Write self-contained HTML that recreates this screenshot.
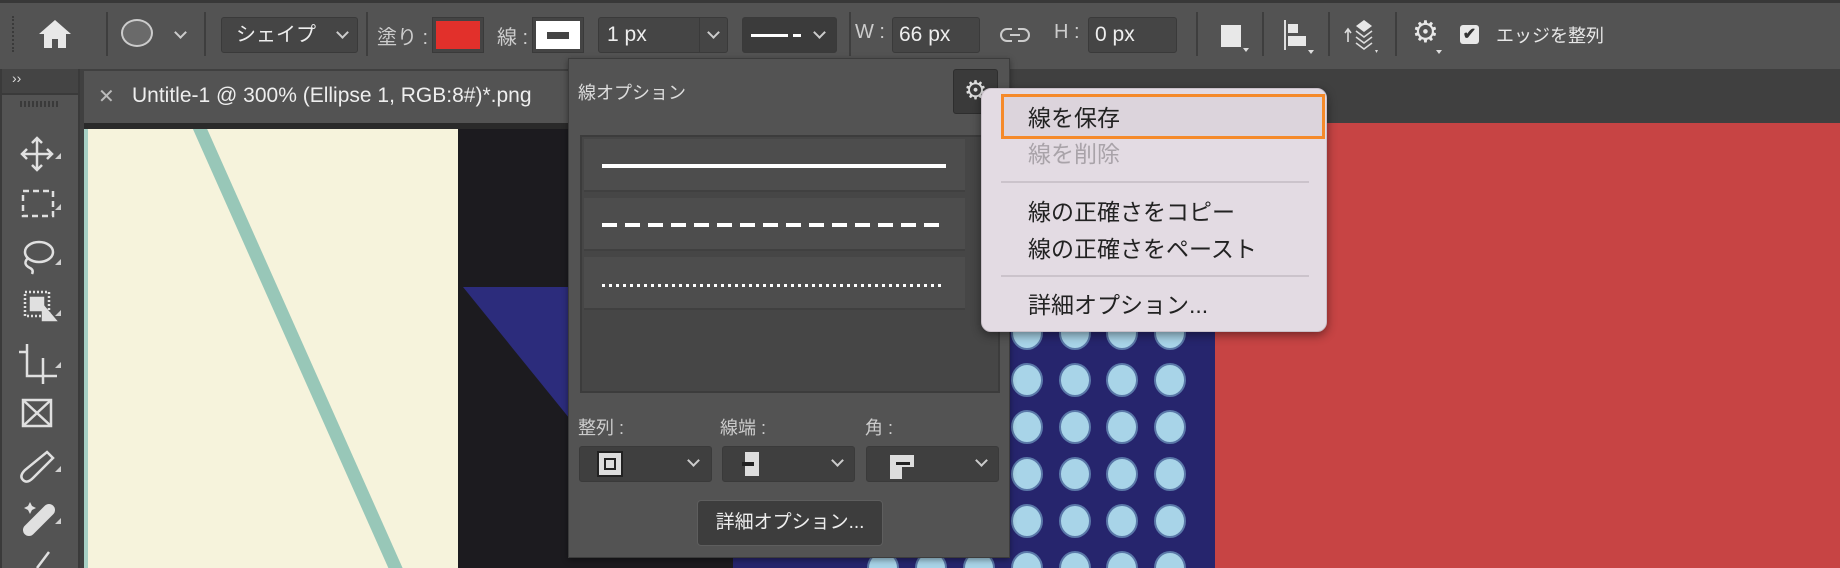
<!DOCTYPE html>
<html><head><meta charset="utf-8"><style>
*{box-sizing:border-box;margin:0;padding:0}
body{width:1840px;height:568px;overflow:hidden;background:#404040;font-family:"Liberation Sans","Noto Sans CJK JP",sans-serif;position:relative;color:#ddd}
.a{position:absolute}
.sep{position:absolute;top:12px;width:2px;height:44px;background:#3e3e3e}
.fld{position:absolute;background:#454545;border:1px solid #3a3a3a;border-radius:3px;color:#eee;font-size:21px;line-height:34px}
.lbl{position:absolute;font-size:20px;color:#ccc;top:21px}
.chev{position:absolute;width:9px;height:9px;border-right:2px solid #ccc;border-bottom:2px solid #ccc;transform:rotate(45deg)}
.menu div.t{position:absolute;left:46px;font-size:23px;color:#222}
</style></head><body>
<div class="a" style="left:0;top:0;width:1840px;height:3px;background:#383838"></div>
<div class="a" style="left:0;top:3px;width:1840px;height:66px;background:#535353"></div>
<div class="a" style="left:12px;top:16px;width:3px;height:36px;border-left:2px dotted #3a3a3a"></div>
<svg class="a" style="left:38px;top:19px" width="34" height="30" viewBox="0 0 34 30"><path d="M17 1 L33 15 H28 V29 H20 V20 H14 V29 H6 V15 H1 Z" fill="#e8e8e8"/></svg>
<div class="sep" style="left:106px"></div>
<div class="a" style="left:121px;top:19px;width:32px;height:28px;border-radius:50%;border:2px solid #ccc;background:#6a6a6a"></div>
<div class="chev" style="left:176px;top:28px"></div>
<div class="sep" style="left:204px"></div>
<div class="fld" style="left:221px;top:17px;width:137px;height:36px;padding-left:14px;font-size:20px">シェイプ</div>
<div class="chev" style="left:338px;top:28px"></div>
<div class="sep" style="left:366px"></div>
<div class="lbl" style="left:377px">塗り :</div>
<div class="a" style="left:432px;top:17px;width:52px;height:36px;border:1px solid #3a3a3a;background:#e2302b;box-shadow:inset 0 0 0 3px #444"></div>
<div class="lbl" style="left:497px">線 :</div>
<div class="a" style="left:532px;top:17px;width:52px;height:36px;border:1px solid #3a3a3a;background:#fff;box-shadow:inset 0 0 0 3px #444"></div>
<div class="a" style="left:547px;top:32px;width:22px;height:7px;background:#444"></div>
<div class="fld" style="left:598px;top:17px;width:130px;height:36px;padding-left:8px">1 px</div>
<div class="a" style="left:699px;top:18px;width:1px;height:34px;background:#3a3a3a"></div>
<div class="chev" style="left:709px;top:28px"></div>
<div class="fld" style="left:742px;top:17px;width:95px;height:36px;background:#3b3b3b"></div>
<div class="a" style="left:751px;top:34px;width:37px;height:3px;background:#fff"></div>
<div class="a" style="left:793px;top:34px;width:8px;height:3px;background:#fff"></div>
<div class="chev" style="left:815px;top:28px"></div>
<div class="sep" style="left:849px"></div>
<div class="lbl" style="left:855px">W :</div>
<div class="fld" style="left:892px;top:17px;width:88px;height:36px;padding-left:6px">66 px</div>
<svg class="a" style="left:1000px;top:26px" width="30" height="18" viewBox="0 0 30 18" fill="none" stroke="#ccc" stroke-width="2"><path d="M12 3 H7 a6 6 0 0 0 0 12 H12 M18 3 H23 a6 6 0 0 1 0 12 H18 M10 9 H20"/></svg>
<div class="lbl" style="left:1054px">H :</div>
<div class="fld" style="left:1088px;top:17px;width:89px;height:36px;padding-left:6px">0 px</div>
<div class="sep" style="left:1196px"></div>
<div class="a" style="left:1221px;top:25px;width:20px;height:22px;background:#e8e8e8"></div>
<div class="a" style="left:1243px;top:48px;border:3px solid transparent;border-top:4px solid #ddd"></div>
<div class="sep" style="left:1262px"></div>
<div class="a" style="left:1284px;top:20px;width:2px;height:30px;background:#ddd"></div>
<div class="a" style="left:1288px;top:24px;width:10px;height:9px;background:#e8e8e8"></div>
<div class="a" style="left:1288px;top:36px;width:18px;height:10px;background:#e8e8e8"></div>
<div class="a" style="left:1308px;top:50px;border:3px solid transparent;border-top:4px solid #ddd"></div>
<div class="sep" style="left:1328px"></div>
<svg class="a" style="left:1342px;top:16px" width="40" height="40" viewBox="0 0 40 40"><path d="M6 26 V14 M3 17 L6 13 L9 17" stroke="#ddd" stroke-width="1.6" fill="none"/><path d="M22 4 L30 10 L22 16 L14 10 Z" fill="#e8e8e8"/><path d="M14 15 L22 21 L30 15 M14 21 L22 27 L30 21 M14 27 L22 33 L30 27" stroke="#ddd" stroke-width="1.6" fill="none"/><path d="M33 34 l3 0 l-1.5 3z" fill="#ddd"/></svg>
<div class="sep" style="left:1395px"></div>
<div class="a" style="left:1412px;top:18px;font-size:30px;color:#e8e8e8;line-height:30px">&#x2699;</div>
<div class="a" style="left:1436px;top:50px;border:3px solid transparent;border-top:4px solid #ddd"></div>
<div class="a" style="left:1460px;top:25px;width:19px;height:19px;background:#e8e8e8;border-radius:3px;color:#333;font-size:16px;line-height:19px;text-align:center;font-weight:bold">&#x2714;</div>
<div class="a" style="left:1496px;top:22px;font-size:18px;color:#e8e8e8">エッジを整列</div>

<div class="a" style="left:0;top:69px;width:80px;height:499px;background:#3a3a3a"></div>
<div class="a" style="left:2px;top:69px;width:76px;height:24px;background:#444"></div>
<div class="a" style="left:12px;top:70px;font-size:14px;color:#ddd">&#x203A;&#x203A;</div>
<div class="a" style="left:2px;top:95px;width:76px;height:473px;background:#535353"></div>
<div class="a" style="left:20px;top:101px;width:38px;height:6px;background:repeating-linear-gradient(90deg,#3a3a3a 0 2px,transparent 2px 4px)"></div>
<svg class="a" style="left:0;top:130px" width="80" height="438" viewBox="0 0 80 438" fill="none" stroke="#e0e0e0" stroke-width="2.5">
<path d="M37 8 V40 M22 24 H52 M32 13 L37 8 L42 13 M32 35 L37 40 L42 35 M27 19 L22 24 L27 29 M47 19 L52 24 L47 29"/>
<rect x="23" y="61" width="30" height="25" stroke-dasharray="6 4"/>
<ellipse cx="39" cy="122" rx="14" ry="10"/><path d="M28 128 q-6 6 2 10 q4 2 2 6"/>
<rect x="25" y="162" width="24" height="24" stroke-dasharray="2 2"/><rect x="31" y="168" width="12" height="12" fill="#e0e0e0"/><path d="M43 176 L55 190 L43 190 Z" fill="#e0e0e0"/>
<path d="M19 222 H27 V246 H51 M27 214 V222 M43 228 V254 M51 246 H57"/>
<rect x="23" y="270" width="28" height="26"/><path d="M23 270 L51 296 M51 270 L23 296"/>
<path d="M47 322 L53 328 L33 348 q-6 6 -10 2 q-4 -4 2 -10 Z"/>
<path d="M29 400 L49 380" stroke-width="12" stroke-linecap="round" stroke="#e0e0e0"/>
<path d="M30 372 l2 4 4 2 -4 2 -2 4 -2 -4 -4 -2 4 -2z" fill="#e0e0e0" stroke="none"/>
<path d="M37 438 L49 422" />
</svg>
<svg class="a" style="left:55px;top:150px" width="12" height="400"><g fill="#cfcfcf"><path d="M0 9 L6 3 V9Z"/><path d="M0 60 L6 54 V60Z"/><path d="M0 115 L6 109 V115Z"/><path d="M0 166 L6 160 V166Z"/><path d="M0 218 L6 212 V218Z"/><path d="M0 322 L6 316 V322Z"/><path d="M0 374 L6 368 V374Z"/></g></svg>

<div class="a" style="left:84px;top:71px;width:1756px;height:52px;background:#404040"></div>
<div class="a" style="left:84px;top:71px;width:500px;height:52px;background:#535353"></div>
<div class="a" style="left:98px;top:84px;font-size:20px;color:#bbb">&#x2715;</div>
<div class="a" style="left:132px;top:84px;font-size:21px;color:#eee;white-space:nowrap">Untitle-1 @ 300% (Ellipse 1, RGB:8#)*.png</div>
<div class="a" style="left:84px;top:123px;width:1756px;height:6px;background:#2a2a2a"></div>

<div class="a" style="left:84px;top:129px;width:374px;height:439px;background:#f6f3dc;overflow:hidden">
<div class="a" style="left:100px;top:-20px;width:13px;height:520px;background:#98c7b8;transform:rotate(-24deg);transform-origin:0 0"></div>
<div class="a" style="left:0;top:0;width:4px;height:439px;background:#a8d0c4"></div>
</div>
<div class="a" style="left:458px;top:129px;width:757px;height:439px;background:#1c1b1f"></div>
<svg class="a" style="left:458px;top:129px" width="757" height="439"><path d="M5 158 H120 V300 Z" fill="#2c2c7c"/><rect x="275" y="150" width="482" height="289" fill="#26256d"/></svg>
<svg class="a" style="left:733px;top:300px" width="482" height="268"><g fill="#a8d4e8" stroke="#5a78a8" stroke-width="2">
<g><ellipse cx="294" cy="33" rx="15" ry="16"/><ellipse cx="342" cy="33" rx="15" ry="16"/><ellipse cx="389" cy="33" rx="15" ry="16"/><ellipse cx="437" cy="33" rx="15" ry="16"/></g>
<g transform="translate(0,47)"><ellipse cx="294" cy="33" rx="15" ry="16"/><ellipse cx="342" cy="33" rx="15" ry="16"/><ellipse cx="389" cy="33" rx="15" ry="16"/><ellipse cx="437" cy="33" rx="15" ry="16"/></g>
<g transform="translate(0,94)"><ellipse cx="294" cy="33" rx="15" ry="16"/><ellipse cx="342" cy="33" rx="15" ry="16"/><ellipse cx="389" cy="33" rx="15" ry="16"/><ellipse cx="437" cy="33" rx="15" ry="16"/></g>
<g transform="translate(0,141)"><ellipse cx="294" cy="33" rx="15" ry="16"/><ellipse cx="342" cy="33" rx="15" ry="16"/><ellipse cx="389" cy="33" rx="15" ry="16"/><ellipse cx="437" cy="33" rx="15" ry="16"/></g>
<g transform="translate(0,188)"><ellipse cx="294" cy="33" rx="15" ry="16"/><ellipse cx="342" cy="33" rx="15" ry="16"/><ellipse cx="389" cy="33" rx="15" ry="16"/><ellipse cx="437" cy="33" rx="15" ry="16"/></g>
<g transform="translate(0,235)"><ellipse cx="294" cy="33" rx="15" ry="16"/><ellipse cx="342" cy="33" rx="15" ry="16"/><ellipse cx="389" cy="33" rx="15" ry="16"/><ellipse cx="437" cy="33" rx="15" ry="16"/><ellipse cx="150" cy="33" rx="15" ry="16"/><ellipse cx="198" cy="33" rx="15" ry="16"/><ellipse cx="246" cy="33" rx="15" ry="16"/></g>
<g transform="translate(0,-47)"><ellipse cx="294" cy="33" rx="15" ry="16"/><ellipse cx="342" cy="33" rx="15" ry="16"/><ellipse cx="389" cy="33" rx="15" ry="16"/><ellipse cx="437" cy="33" rx="15" ry="16"/></g>
</g></svg>
<div class="a" style="left:1215px;top:123px;width:625px;height:445px;background:#c74444"></div>

<div class="a" style="left:568px;top:58px;width:442px;height:500px;background:#535353;border:1px solid #3c3c3c;box-shadow:0 2px 6px rgba(0,0,0,.4)"></div>
<div class="a" style="left:578px;top:79px;font-size:18px;color:#ddd">線オプション</div>
<div class="a" style="left:953px;top:69px;width:45px;height:45px;background:#3a3a3a;border:1px solid #2e2e2e;border-radius:3px;color:#ddd;font-size:26px;text-align:center;line-height:40px">&#x2699;</div>
<div class="a" style="left:580px;top:135px;width:420px;height:258px;background:#464646;border:2px solid #3c3c3c"></div>
<div class="a" style="left:584px;top:139px;width:381px;height:53px;background:#4d4d4d;border-bottom:2px solid #404040"></div>
<div class="a" style="left:584px;top:198px;width:381px;height:53px;background:#4d4d4d;border-bottom:2px solid #404040"></div>
<div class="a" style="left:584px;top:257px;width:381px;height:53px;background:#4d4d4d;border-bottom:2px solid #404040"></div>
<div class="a" style="left:602px;top:164px;width:344px;height:4px;background:#fff"></div>
<div class="a" style="left:602px;top:223px;width:344px;height:4px;background:repeating-linear-gradient(90deg,#fff 0 15px,transparent 15px 23px)"></div>
<div class="a" style="left:602px;top:284px;width:342px;height:3px;background:repeating-linear-gradient(90deg,#fff 0 3px,transparent 3px 7px)"></div>
<div class="a" style="left:578px;top:414px;font-size:18px;color:#ccc">整列 :</div>
<div class="a" style="left:720px;top:414px;font-size:18px;color:#ccc">線端 :</div>
<div class="a" style="left:865px;top:414px;font-size:18px;color:#ccc">角 :</div>
<div class="fld" style="left:579px;top:446px;width:133px;height:36px;background:#3f3f3f"></div>
<div class="fld" style="left:722px;top:446px;width:133px;height:36px;background:#3f3f3f"></div>
<div class="fld" style="left:866px;top:446px;width:133px;height:36px;background:#3f3f3f"></div>
<div class="a" style="left:597px;top:451px;width:26px;height:26px;background:#ddd;border:2px solid #222;box-shadow:inset 0 0 0 5px #ddd,inset 0 0 0 7px #222"></div>
<div class="a" style="left:745px;top:452px;width:14px;height:24px;background:#ddd"></div>
<div class="a" style="left:742px;top:462px;width:12px;height:4px;background:#222"></div>
<div class="a" style="left:890px;top:455px;width:24px;height:24px;background:#ddd;clip-path:polygon(0 0,100% 0,100% 50%,50% 50%,50% 100%,0 100%)"></div>
<div class="a" style="left:896px;top:462px;width:14px;height:3px;background:#222"></div>
<div class="chev" style="left:689px;top:456px"></div>
<div class="chev" style="left:833px;top:456px"></div>
<div class="chev" style="left:977px;top:456px"></div>
<div class="a" style="left:697px;top:500px;width:186px;height:46px;background:#3d3d3d;border:1px solid #5e5e5e;border-radius:4px;color:#eee;font-size:19px;text-align:center;line-height:44px">詳細オプション...</div>

<div class="a menu" style="left:981px;top:88px;width:346px;height:244px;background:#e3dbe3;border-radius:10px;box-shadow:0 3px 10px rgba(0,0,0,.45);border:1px solid #c9c0c9">
<div class="a" style="left:19px;top:5px;width:324px;height:45px;border:3px solid #f58a2a;background:#dcd4dc"></div>
<div class="t" style="top:10px">線を保存</div>
<div class="t" style="top:46px;color:#a9a3a9">線を削除</div>
<div class="a" style="left:19px;top:92px;width:308px;height:2px;background:#cbc3cb"></div>
<div class="t" style="top:104px">線の正確さをコピー</div>
<div class="t" style="top:141px">線の正確さをペースト</div>
<div class="a" style="left:19px;top:186px;width:308px;height:2px;background:#cbc3cb"></div>
<div class="t" style="top:197px">詳細オプション...</div>
</div>
</body></html>
